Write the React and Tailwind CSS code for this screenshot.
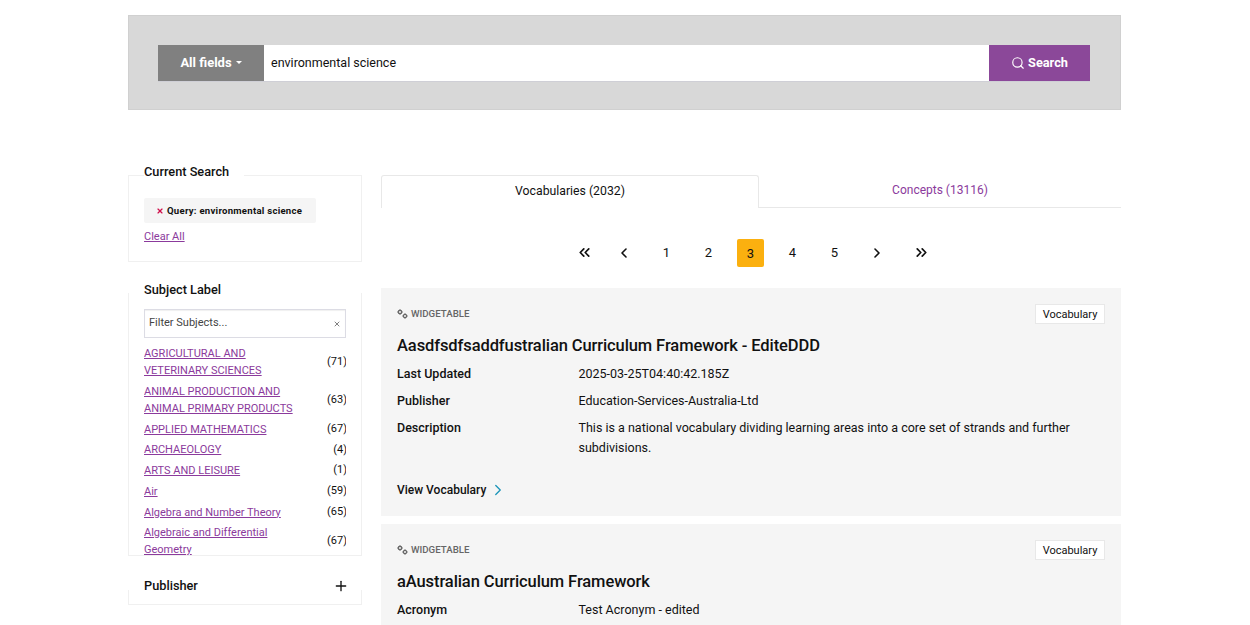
import React from 'react';
import { ChevronLeft, ChevronRight, ChevronsLeft, ChevronsRight, Plus, Search, X } from 'lucide-react';

const subjects = [
  { label: ['AGRICULTURAL AND', 'VETERINARY SCIENCES'], count: 71 },
  { label: ['ANIMAL PRODUCTION AND', 'ANIMAL PRIMARY PRODUCTS'], count: 63 },
  { label: ['APPLIED MATHEMATICS'], count: 67 },
  { label: ['ARCHAEOLOGY'], count: 4 },
  { label: ['ARTS AND LEISURE'], count: 1 },
  { label: ['Air'], count: 59 },
  { label: ['Algebra and Number Theory'], count: 65 },
  { label: ['Algebraic and Differential', 'Geometry'], count: 67 },
];

const Gears = () => (
  <svg width="11" height="10" viewBox="0 0 11 10" fill="none" stroke="#666" strokeWidth="1.2">
    <circle cx="3" cy="3" r="1.6" />
    <path d="M3 0v1M3 5v1M0 3h1M5 3h1M1 1l.6.6M5 1l-.6.6M1 5l.6-.6M5 5l-.6-.6" strokeWidth="0.9" />
    <circle cx="8" cy="7" r="1.6" />
    <path d="M8 4.2v1M8 8.8v1M5.2 7h1M9.8 7h1" strokeWidth="0.9" />
  </svg>
);

const Row = ({ label, children }) => (
  <div className="flex leading-[20px]">
    <div className="w-[181.5px] shrink-0 font-medium">{label}</div>
    <div className="flex-1 pr-[10px]">{children}</div>
  </div>
);

const Card = ({ title, className, children }) => (
  <div className={`bg-[#f5f5f5] px-[16px] ${className}`}>
    <div className="flex items-start justify-between pt-[16px]">
      <div className="flex items-center gap-[3px] pt-[4px] text-[9.7px] font-medium leading-[12px] text-[#666]">
        <Gears />
        WIDGETABLE
      </div>
      <div className="w-[70px] h-[20px] bg-white border border-[#e8e8e8] text-[11px] leading-[19px] text-center">Vocabulary</div>
    </div>
    <h3 className="mt-[11px] text-[16.5px] leading-[22px] font-medium tracking-[-0.1px] text-[#111]">{title}</h3>
    {children}
  </div>
);

const App = () => {
  return (
    <div className="h-screen overflow-hidden bg-white text-[#111] font-['Roboto',sans-serif]">
      <div className="w-[993px] ml-[128px] pt-[15px]">
        {/* search band */}
        <div className="h-[95px] bg-[#d8d8d8] border border-[#d0d0d0] pt-[29px] pl-[29px] pr-[30px]">
          <div className="flex h-[37px] border-b border-[#cfcfd6]">
            <button className="w-[106px] bg-[#808080] text-white text-[13px] font-bold flex items-center justify-center gap-[2px]">
              All fields
              <span className="ml-[2px] mb-[1px] border-x-[3.5px] border-x-transparent border-t-[3.5px] border-t-white"></span>
            </button>
            <div className="flex-1 bg-white pl-[7px] text-[12.5px] leading-[36px]">environmental science</div>
            <button className="w-[101px] bg-[#8b4899] text-white text-[12.75px] font-bold flex items-center justify-center gap-[3px]">
              <Search size={14} strokeWidth={2} />
              Search
            </button>
          </div>
        </div>

        <div className="flex gap-[19px] mt-[63px]">
          {/* left filters */}
          <div className="w-[234px] shrink-0 text-[11px]">
            <div className="h-[87px] border border-[#f0f0f0] mt-[2px] px-[15px]">
              <h4 className="-mt-[12px] w-fit bg-white pr-[15px] text-[12.75px] leading-[16px] font-medium">Current Search</h4>
              <div className="mt-[18px] h-[25px] w-[172px] bg-[#f5f5f5] rounded-[2px] flex items-center pl-[12px] pt-[1px] gap-[3px] text-[9.6px] font-bold tracking-[0.25px]">
                <X size={8} strokeWidth={3.5} className="text-[#d0104c]" />
                Query: environmental science
              </div>
              <a className="block mt-[7px] text-[#8b3a9c] underline leading-[14px] text-[11px]">Clear All</a>
            </div>

            <h4 className="mt-[20px] px-[16px] text-[12.75px] leading-[16px] font-medium">Subject Label</h4>
            <div className="-mt-[5px] h-[263px] border-x border-b border-[#f0f0f0] px-[15px] pt-[16px]">
              <div className="h-[29px] border border-[#dcdce4] shadow-[inset_0_1px_1px_#f0f0f0] flex items-center justify-between px-[4px] text-[11px] text-[#444]">
                Filter Subjects...
                <X size={8} strokeWidth={2.5} className="text-[#666]" />
              </div>
              <div className="h-[217px] overflow-hidden pt-[7px] flex flex-col gap-[3.75px]">
                {subjects.map((s) => (
                  <div key={s.count + s.label[0]} className="flex items-center justify-between shrink-0">
                    <a className="text-[#8b3a9c] underline text-[11px] leading-[17px]">
                      {s.label.map((line) => (
                        <span key={line} className="block">{line}</span>
                      ))}
                    </a>
                    <span className="text-[11px] -mr-[1px]">({s.count})</span>
                  </div>
                ))}
              </div>
            </div>

            <div className="mt-[22px] px-[16px] flex items-center justify-between">
              <h4 className="text-[12.75px] leading-[16px] font-medium">Publisher</h4>
              <Plus size={16} strokeWidth={2} className="-mr-[3px]" />
            </div>
            <div className="-mt-[4px] h-[15px] border-x border-b border-[#f0f0f0]"></div>
          </div>

          {/* results */}
          <div className="flex-1 mt-[2px] text-[12.5px]">
            <div className="flex h-[33px] border-b border-[#e8e8e8]">
              <div className="w-[378px] h-[33px] bg-white border border-b-0 border-[#e8e8e8] rounded-t-[3px] text-center leading-[30px] text-[12.25px]">Vocabularies (2032)</div>
              <div className="flex-1 text-center leading-[31px] text-[12px] text-[#8b3a9c]">Concepts (13116)</div>
            </div>

            <div className="flex justify-center items-center gap-[15px] mt-[30px] h-[29px] text-[13px] -ml-[1px]">
              <ChevronsLeft size={17} strokeWidth={2.4} className="ml-[8px] mr-[2px]" />
              <ChevronLeft size={16} strokeWidth={2.4} className="mx-[6px]" />
              <span className="w-[27px] text-center pt-[1px]">1</span>
              <span className="w-[27px] text-center pt-[1px]">2</span>
              <span className="w-[27px] h-[28px] leading-[29px] text-center bg-[#fbb00f] rounded-[2px]">3</span>
              <span className="w-[27px] text-center pt-[1px]">4</span>
              <span className="w-[27px] text-center pt-[1px]">5</span>
              <ChevronRight size={16} strokeWidth={2.4} className="mx-[6px]" />
              <ChevronsRight size={17} strokeWidth={2.4} className="ml-[7px] mr-[3px]" />
            </div>

            <Card title="Aasdfsdfsaddfustralian Curriculum Framework - EditeDDD" className="mt-[21px] h-[228px]">
              <div className="mt-[7px] flex flex-col gap-[7px]">
                <Row label="Last Updated">2025-03-25T04:40:42.185Z</Row>
                <Row label="Publisher">Education-Services-Australia-Ltd</Row>
                <Row label="Description">
                  This is a national vocabulary dividing learning areas into a core set of strands and further subdivisions.
                </Row>
              </div>
              <div className="mt-[23px] flex items-center gap-[3px] text-[12px] font-medium">
                View Vocabulary
                <ChevronRight size={18} strokeWidth={1.75} className="text-[#1a94b8]" />
              </div>
            </Card>

            <Card title="aAustralian Curriculum Framework" className="mt-[8px] h-[200px]">
              <div className="mt-[7px] flex flex-col gap-[7px]">
                <Row label="Acronym">Test Acronym - edited</Row>
              </div>
            </Card>
          </div>
        </div>
      </div>
    </div>
  );
};

export default App;
